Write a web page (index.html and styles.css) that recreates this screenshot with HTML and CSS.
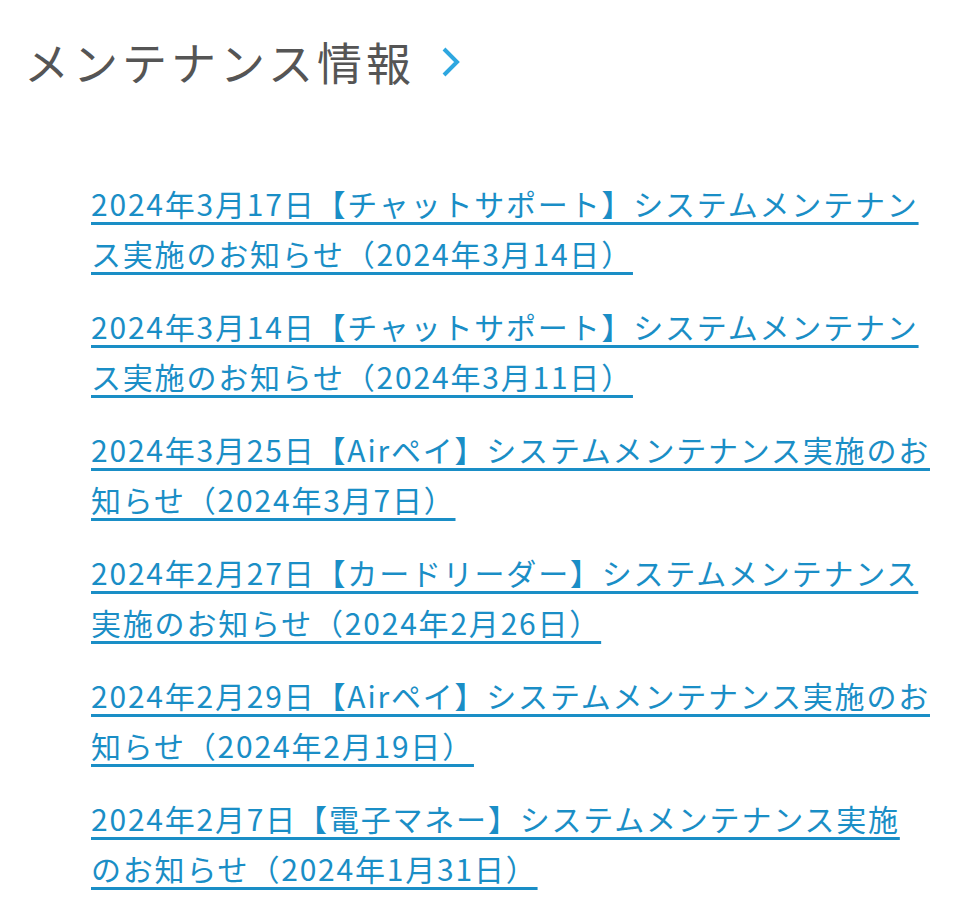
FILE: index.html
```html
<!DOCTYPE html>
<html lang="ja">

<head>
    <title>メンテナンス情報</title>
    <link rel="stylesheet" href="styles.css">
</head>

<body>
    <section class="news">
        <h2 class="news-title">
            メンテナンス情報
            <svg class="chevron" width="20" height="30" viewBox="0 0 20 30">
                <path d="M3 2 L16 15 L3 28" fill="none" stroke="#2ea7e0" stroke-width="4" />
            </svg>
        </h2>
        <ul class="news-list">
            <li><a href="#">2024年3月17日【チャットサポート】システムメンテナンス実施のお知らせ（2024年3月14日）</a></li>
            <li><a href="#">2024年3月14日【チャットサポート】システムメンテナンス実施のお知らせ（2024年3月11日）</a></li>
            <li><a href="#">2024年3月25日【Airペイ】システムメンテナンス実施のお知らせ（2024年3月7日）</a></li>
            <li><a href="#">2024年2月27日【カードリーダー】システムメンテナンス実施のお知らせ（2024年2月26日）</a></li>
            <li><a href="#">2024年2月29日【Airペイ】システムメンテナンス実施のお知らせ（2024年2月19日）</a></li>
            <li><a href="#">2024年2月7日【電子マネー】システムメンテナンス実施のお知らせ（2024年1月31日）</a></li>
        </ul>
    </section>
</body>

</html>
```

FILE: styles.css
```css
body {
    margin: 0;
    background-color: #fff;
    font-family: "Noto Sans CJK JP", "Noto Sans", sans-serif;
}

section.news {
    padding: 22px 24px 0 24px;
}

h2.news-title {
    display: flex;
    align-items: center;
    margin: 0;
    font-size: 45px;
    font-weight: normal;
    letter-spacing: 4px;
    line-height: 80px;
    color: #555;
}

.chevron {
    margin-left: 26px;
}

ul.news-list {
    list-style: none;
    margin: 0;
    padding: 0 7px 0 67px;
    margin-top: 76px;
}

ul.news-list li {
    margin-bottom: 23px;
    font-size: 30px;
    letter-spacing: 1.8px;
    line-height: 50px;
}

ul.news-list a {
    color: #1a8ec6;
    text-decoration: underline;
    text-decoration-thickness: 3px;
    text-underline-offset: 6px;
}
```
